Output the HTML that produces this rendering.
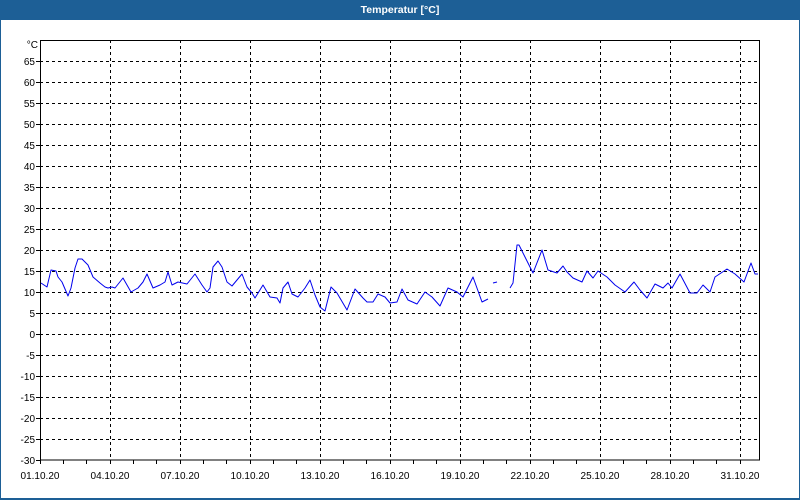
<!DOCTYPE html>
<html><head><meta charset="utf-8"><style>
body{margin:0;width:800px;height:500px;overflow:hidden;background:#fff;font-family:"Liberation Sans",sans-serif;}
</style></head><body>
<svg width="800" height="500" xmlns="http://www.w3.org/2000/svg" style="position:absolute;left:0;top:0">
<rect x="0" y="0" width="800" height="500" fill="#1d5f96"/>
<rect x="1" y="20" width="798" height="478" fill="#fff"/>
<text x="400" y="13" fill="#fff" font-size="10.5" font-weight="bold" text-anchor="middle">Temperatur [°C]</text>
<g stroke="#000" stroke-dasharray="3,3" stroke-width="1">
<line x1="40" x2="760" y1="61.5" y2="61.5"/><line x1="40" x2="760" y1="82.5" y2="82.5"/><line x1="40" x2="760" y1="103.5" y2="103.5"/><line x1="40" x2="760" y1="124.5" y2="124.5"/><line x1="40" x2="760" y1="145.5" y2="145.5"/><line x1="40" x2="760" y1="166.5" y2="166.5"/><line x1="40" x2="760" y1="187.5" y2="187.5"/><line x1="40" x2="760" y1="208.5" y2="208.5"/><line x1="40" x2="760" y1="229.5" y2="229.5"/><line x1="40" x2="760" y1="250.5" y2="250.5"/><line x1="40" x2="760" y1="271.5" y2="271.5"/><line x1="40" x2="760" y1="292.5" y2="292.5"/><line x1="40" x2="760" y1="313.5" y2="313.5"/><line x1="40" x2="760" y1="334.5" y2="334.5"/><line x1="40" x2="760" y1="355.5" y2="355.5"/><line x1="40" x2="760" y1="376.5" y2="376.5"/><line x1="40" x2="760" y1="397.5" y2="397.5"/><line x1="40" x2="760" y1="418.5" y2="418.5"/><line x1="40" x2="760" y1="439.5" y2="439.5"/>
<line y1="40" y2="460" x1="110.5" x2="110.5"/><line y1="40" y2="460" x1="180.5" x2="180.5"/><line y1="40" y2="460" x1="250.5" x2="250.5"/><line y1="40" y2="460" x1="320.5" x2="320.5"/><line y1="40" y2="460" x1="390.5" x2="390.5"/><line y1="40" y2="460" x1="460.5" x2="460.5"/><line y1="40" y2="460" x1="530.5" x2="530.5"/><line y1="40" y2="460" x1="600.5" x2="600.5"/><line y1="40" y2="460" x1="670.5" x2="670.5"/><line y1="40" y2="460" x1="740.5" x2="740.5"/>
</g>
<rect x="40.5" y="40.5" width="719" height="419.5" fill="none" stroke="#000"/>
<g stroke="#000"><path d="M40.5 460v4M63.5 460v4M86.5 460v4M110.5 460v4M133.5 460v4M156.5 460v4M180.5 460v4M203.5 460v4M226.5 460v4M250.5 460v4M273.5 460v4M296.5 460v4M320.5 460v4M343.5 460v4M366.5 460v4M390.5 460v4M413.5 460v4M436.5 460v4M460.5 460v4M483.5 460v4M506.5 460v4M530.5 460v4M553.5 460v4M576.5 460v4M600.5 460v4M623.5 460v4M646.5 460v4M670.5 460v4M693.5 460v4M716.5 460v4M740.5 460v4M36 61.5h4M36 82.5h4M36 103.5h4M36 124.5h4M36 145.5h4M36 166.5h4M36 187.5h4M36 208.5h4M36 229.5h4M36 250.5h4M36 271.5h4M36 292.5h4M36 313.5h4M36 334.5h4M36 355.5h4M36 376.5h4M36 397.5h4M36 418.5h4M36 439.5h4M36 460.5h4"/></g>
<g font-size="10" fill="#000" text-anchor="end">
<text x="38" y="48">°C</text>
<text x="35" y="65">65</text><text x="35" y="86">60</text><text x="35" y="107">55</text><text x="35" y="128">50</text><text x="35" y="149">45</text><text x="35" y="170">40</text><text x="35" y="191">35</text><text x="35" y="212">30</text><text x="35" y="233">25</text><text x="35" y="254">20</text><text x="35" y="275">15</text><text x="35" y="296">10</text><text x="35" y="317">5</text><text x="35" y="338">0</text><text x="35" y="359">-5</text><text x="35" y="380">-10</text><text x="35" y="401">-15</text><text x="35" y="422">-20</text><text x="35" y="443">-25</text><text x="35" y="464">-30</text>
</g>
<g font-size="10" fill="#000" text-anchor="middle">
<text x="40" y="479">01.10.20</text><text x="110" y="479">04.10.20</text><text x="180" y="479">07.10.20</text><text x="250" y="479">10.10.20</text><text x="320" y="479">13.10.20</text><text x="390" y="479">16.10.20</text><text x="460" y="479">19.10.20</text><text x="530" y="479">22.10.20</text><text x="600" y="479">25.10.20</text><text x="670" y="479">28.10.20</text><text x="740" y="479">31.10.20</text>
</g>
<g fill="none" stroke="#0000ee" stroke-width="1" stroke-linejoin="round">
<polyline points="41,283 47,287 51,270 56,271 58,277 62,282 68,296 71,288 75,268 78,259 82,259 88,265 93,277 100,283 105,287 108,288 112,287 115,288 123,278 131,292 138,288 143,282 147,274 153,288 160,285 165,282 168,272 172,285 178,282 187,284 195,274 202,285 207,292 210,288 213,267 218,261 222,267 227,282 232,286 242,274 247,287 252,293 255,298 263,285 270,297 277,298 280,303 283,288 288,282 292,294 298,297 305,288 310,280 315,295 320,307 325,311 331,287 337,293 347,310 355,289 363,298 367,302 373,302 378,294 385,297 390,303 397,302 402,289 408,300 417,304 425,292 432,297 440,306 448,288 457,292 463,297 473,277 482,302 488,299"/>
<polyline points="493,283 497,282"/>
<polyline points="510,288 513,283 517,245 519,245 525,257 533,273 542,250 548,270 557,273 563,266 567,272 573,278 582,282 587,271 593,278 598,271 607,277 615,285 625,292 634,282 640,290 647,298 655,284 663,288 668,283 672,288 680,274 690,293 697,293 703,285 710,292 715,277 727,269 735,274 744,282 751,263 755,274 758,274"/>
</g>
</svg>
</body></html>
